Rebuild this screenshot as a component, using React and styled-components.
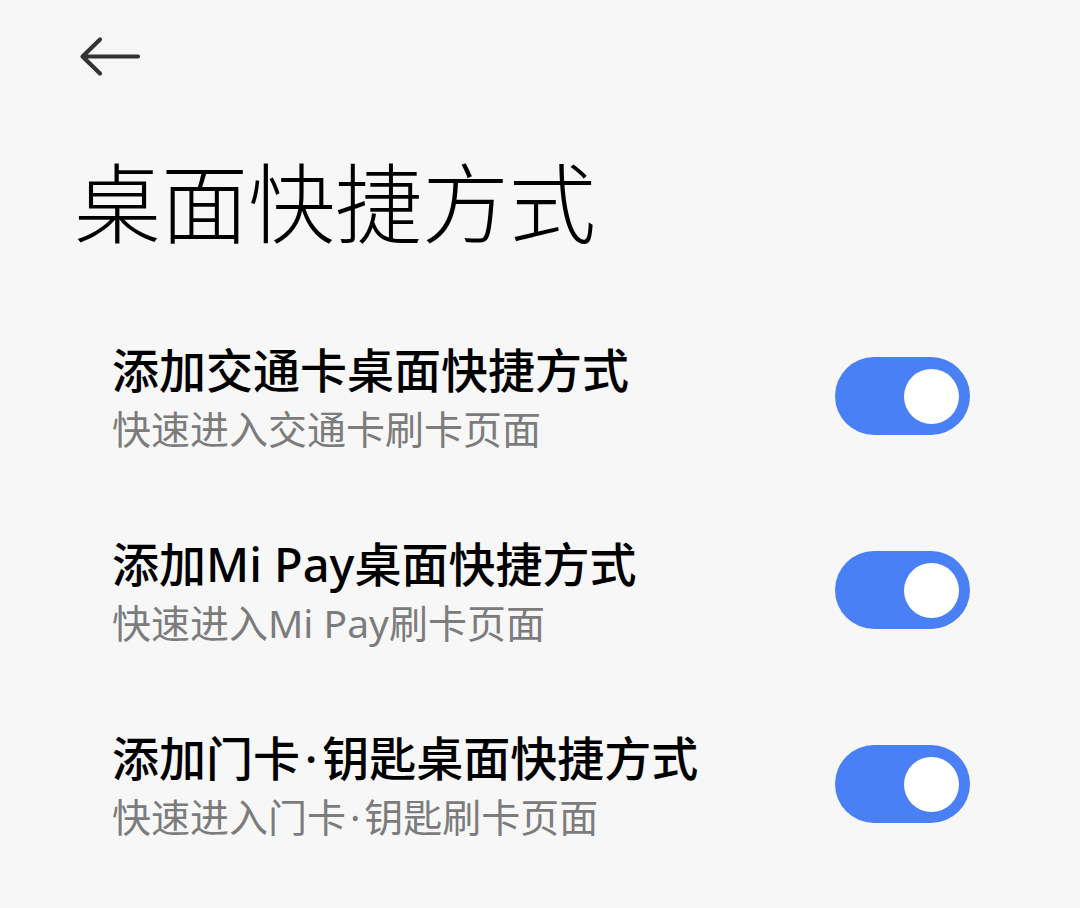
import React, { useState } from 'react';
import styled, { createGlobalStyle } from 'styled-components';

const GlobalStyle = createGlobalStyle`
  html, body {
    margin: 0;
    padding: 0;
    background: #f7f7f7;
  }
  body {
    font-family: "Noto Sans CJK SC", "Noto Sans", sans-serif;
  }
`;

const Page = styled.div`
  width: 1080px;
  min-height: 908px;
  background: #f7f7f7;
  display: flex;
  flex-direction: column;
`;

const TopBar = styled.div`
  height: 114px;
  padding-left: 78px;
  display: flex;
  align-items: flex-start;
  padding-top: 34px;
  box-sizing: border-box;
`;

const BackButton = styled.button`
  border: none;
  background: none;
  padding: 0;
  width: 64px;
  height: 46px;
  cursor: pointer;
  display: flex;
  align-items: center;
`;

const PageTitle = styled.h1`
  margin: 0;
  padding: 13px 0 0 74px;
  font-size: 87px;
  font-weight: 300;
  line-height: 144px;
  color: #000;
`;

const List = styled.div`
  display: flex;
  flex-direction: column;
  padding: 31px 110px 0 112px;
`;

const Row = styled.div`
  height: 194px;
  display: flex;
  align-items: center;
  justify-content: space-between;
`;

const TextCol = styled.div`
  display: flex;
  flex-direction: column;
  font-family: "Noto Sans", "Noto Sans CJK SC", sans-serif;
`;

const RowTitle = styled.div`
  font-size: 47px;
  font-weight: 500;
  color: #000;
  line-height: 60px;
`;

const RowSub = styled.div`
  font-size: 39px;
  color: #7c7c7c;
  line-height: 58px;
`;

const Dot = styled.span`
  margin: 0 0.1em;
`;

const Track = styled.button`
  margin-bottom: 6px;
  width: 135px;
  height: 78px;
  border-radius: 39px;
  border: none;
  padding: 0 11px;
  background: ${(p) => (p.$on ? '#4a80f5' : '#d9d9d9')};
  display: flex;
  align-items: center;
  justify-content: ${(p) => (p.$on ? 'flex-end' : 'flex-start')};
  box-sizing: border-box;
  cursor: pointer;
`;

const Knob = styled.span`
  width: 55px;
  height: 55px;
  border-radius: 50%;
  background: #fff;
`;

const items = [
  { title: '添加交通卡桌面快捷方式', sub: '快速进入交通卡刷卡页面' },
  { title: '添加Mi Pay桌面快捷方式', sub: '快速进入Mi Pay刷卡页面' },
  { title: '添加门卡·钥匙桌面快捷方式', sub: '快速进入门卡·钥匙刷卡页面' },
];

// the middle dot sits with a little air on both sides
const withDot = (text) => {
  const parts = text.split('·');
  return parts.map((p, i) => (
    <React.Fragment key={i}>
      {i > 0 && <Dot>·</Dot>}
      {p}
    </React.Fragment>
  ));
};

export default function App() {
  const [state, setState] = useState([true, true, true]);

  const toggle = (i) => {
    setState(state.map((v, j) => (j === i ? !v : v)));
  };

  return (
    <Page>
      <GlobalStyle />
      <TopBar>
        <BackButton aria-label="返回">
          <svg width="64" height="46" viewBox="0 0 64 46" fill="none">
            <path
              d="M60 22.5H5M22 5.5L4.5 22.5L22 39.5"
              stroke="#333"
              strokeWidth="4.2"
              strokeLinecap="round"
              strokeLinejoin="round"
            />
          </svg>
        </BackButton>
      </TopBar>
      <PageTitle>桌面快捷方式</PageTitle>
      <List>
        {items.map((item, i) => (
          <Row key={i}>
            <TextCol>
              <RowTitle>{withDot(item.title)}</RowTitle>
              <RowSub>{withDot(item.sub)}</RowSub>
            </TextCol>
            <Track $on={state[i]} onClick={() => toggle(i)}>
              <Knob />
            </Track>
          </Row>
        ))}
      </List>
    </Page>
  );
}
